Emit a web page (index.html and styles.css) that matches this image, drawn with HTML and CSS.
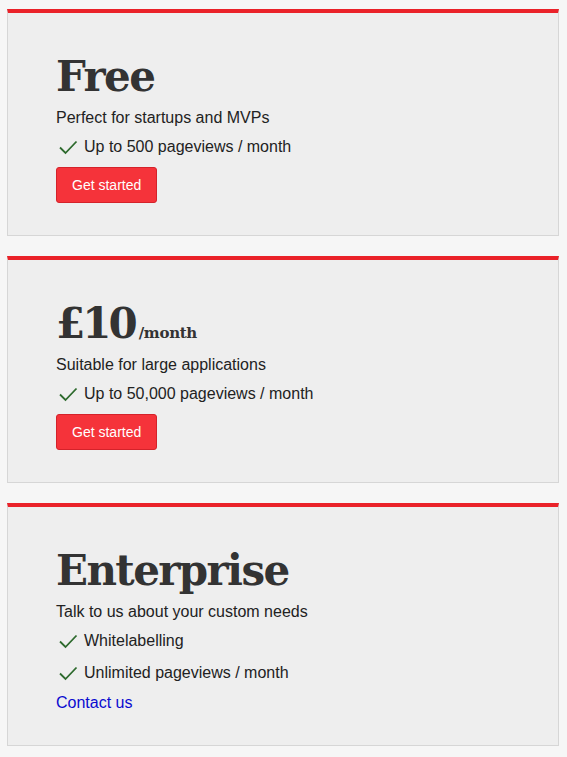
FILE: index.html
```html
<!DOCTYPE html>
<html>
<head>
<meta charset="utf-8">
<link rel="stylesheet" href="styles.css">
</head>
<body>
<main class="plans">
  <section class="card">
    <h2 class="title">Free</h2>
    <p class="desc">Perfect for startups and MVPs</p>
    <ul class="features">
      <li><svg class="check" viewBox="0 0 20 16"><path d="M2 8.5 L7.5 14 L18.5 2.5"/></svg>Up to 500 pageviews / month</li>
    </ul>
    <a class="btn" href="#">Get started</a>
  </section>
  <section class="card">
    <h2 class="title"><span class="price">£10</span><span class="per">/month</span></h2>
    <p class="desc">Suitable for large applications</p>
    <ul class="features">
      <li><svg class="check" viewBox="0 0 20 16"><path d="M2 8.5 L7.5 14 L18.5 2.5"/></svg>Up to 50,000 pageviews / month</li>
    </ul>
    <a class="btn" href="#">Get started</a>
  </section>
  <section class="card">
    <h2 class="title">Enterprise</h2>
    <p class="desc">Talk to us about your custom needs</p>
    <ul class="features">
      <li><svg class="check" viewBox="0 0 20 16"><path d="M2 8.5 L7.5 14 L18.5 2.5"/></svg>Whitelabelling</li>
      <li><svg class="check" viewBox="0 0 20 16"><path d="M2 8.5 L7.5 14 L18.5 2.5"/></svg>Unlimited pageviews / month</li>
    </ul>
    <a class="link" href="#">Contact us</a>
  </section>
</main>
</body>
</html>
```
FILE: styles.css
```css
html, body {
  margin: 0;
  padding: 0;
  background: #f6f6f6;
}
body {
  font-family: "Liberation Sans", Arial, sans-serif;
  color: #222;
}
.plans {
  display: flex;
  flex-direction: column;
  gap: 20px;
  padding: 9px 8px 12px 7px;
}
.card {
  background: #eeeeee;
  border: 1px solid #d6d6d6;
  border-top: 4px solid #ea2229;
  padding: 38px 48px 32px 48px;
  display: flex;
  flex-direction: column;
  align-items: flex-start;
}
.title {
  margin: 0;
  font-family: "DejaVu Serif", serif;
  font-weight: bold;
  font-size: 42px;
  line-height: 51px;
  color: #333;
  letter-spacing: -1.6px;
}
.price {
  letter-spacing: -3px;
  margin-right: 4px;
}
.per {
  font-size: 15px;
  line-height: 1;
  letter-spacing: -0.3px;
}
.desc {
  margin: 6px 0 0;
  font-size: 16px;
  line-height: 20px;
}
.features {
  list-style: none;
  margin: 9px 0 0;
  padding: 0;
  display: flex;
  flex-direction: column;
  gap: 12px;
}
.features li {
  display: flex;
  align-items: center;
  gap: 6px;
  font-size: 16px;
  line-height: 20px;
}
.check {
  width: 20px;
  height: 16px;
  margin-left: 2px;
  fill: none;
  stroke: #2d6a2d;
  stroke-width: 1.8;
}
.btn {
  margin-top: 10px;
  display: inline-block;
  background: #f5333a;
  border: 1px solid #d4222a;
  border-radius: 3px;
  color: #fff;
  text-decoration: none;
  font-size: 14px;
  line-height: 34px;
  padding: 0 15px;
}
.link {
  margin-top: 10px;
  color: #0a0ad0;
  text-decoration: none;
  font-size: 16px;
  line-height: 20px;
}
```
